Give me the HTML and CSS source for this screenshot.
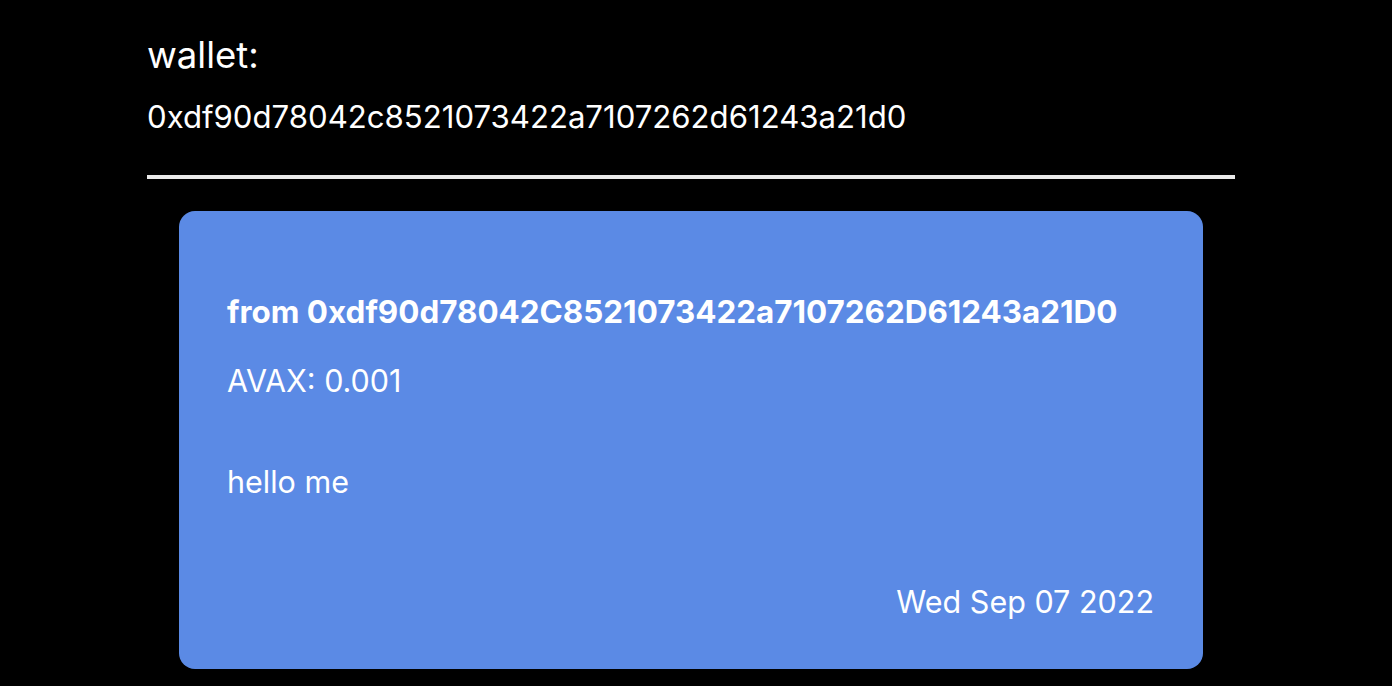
FILE: index.html
```html
<!DOCTYPE html>
<html>
<head>
<meta charset="utf-8">
<link rel="stylesheet" href="styles.css">
</head>
<body>
<div class="page">
  <div class="wallet">
    <div class="wallet-label">wallet:</div>
    <div class="wallet-address">0xdf90d78042c8521073422a7107262d61243a21d0</div>
  </div>
  <div class="divider"></div>
  <div class="card">
    <div class="card-from">from 0xdf90d78042C8521073422a7107262D61243a21D0</div>
    <div class="card-amount">AVAX: 0.001</div>
    <div class="card-message">hello me</div>
    <div class="card-date">Wed Sep 07 2022</div>
  </div>
</div>
</body>
</html>
```
FILE: styles.css
```css
html, body {
  margin: 0;
  padding: 0;
  background: #000;
}
body {
  font-family: Inter, "Noto Sans", sans-serif;
  color: #fff;
}
.page {
  width: 1088px;
  margin-left: 147px;
  padding-top: 33px;
}
.wallet-label {
  font-size: 36.5px;
  line-height: 44px;
}
.wallet-address {
  font-size: 31.15px;
  line-height: 38px;
  margin-top: 21px;
}
.divider {
  height: 4px;
  background: #eaeaea;
  margin-top: 39px;
}
.card {
  margin: 32px 32px 0 32px;
  background: #5b8ae5;
  border-radius: 16px;
  padding: 82px 49px 48px 48px;
  display: flex;
  flex-direction: column;
}
.card-from {
  font-size: 31.4px;
  font-weight: 700;
  line-height: 38px;
}
.card-amount {
  font-size: 30.5px;
  line-height: 38px;
  margin-top: 31px;
}
.card-message {
  font-size: 30.5px;
  line-height: 38px;
  margin-top: 63px;
}
.card-date {
  font-size: 30.5px;
  line-height: 38px;
  margin-top: 82px;
  text-align: right;
}
```
